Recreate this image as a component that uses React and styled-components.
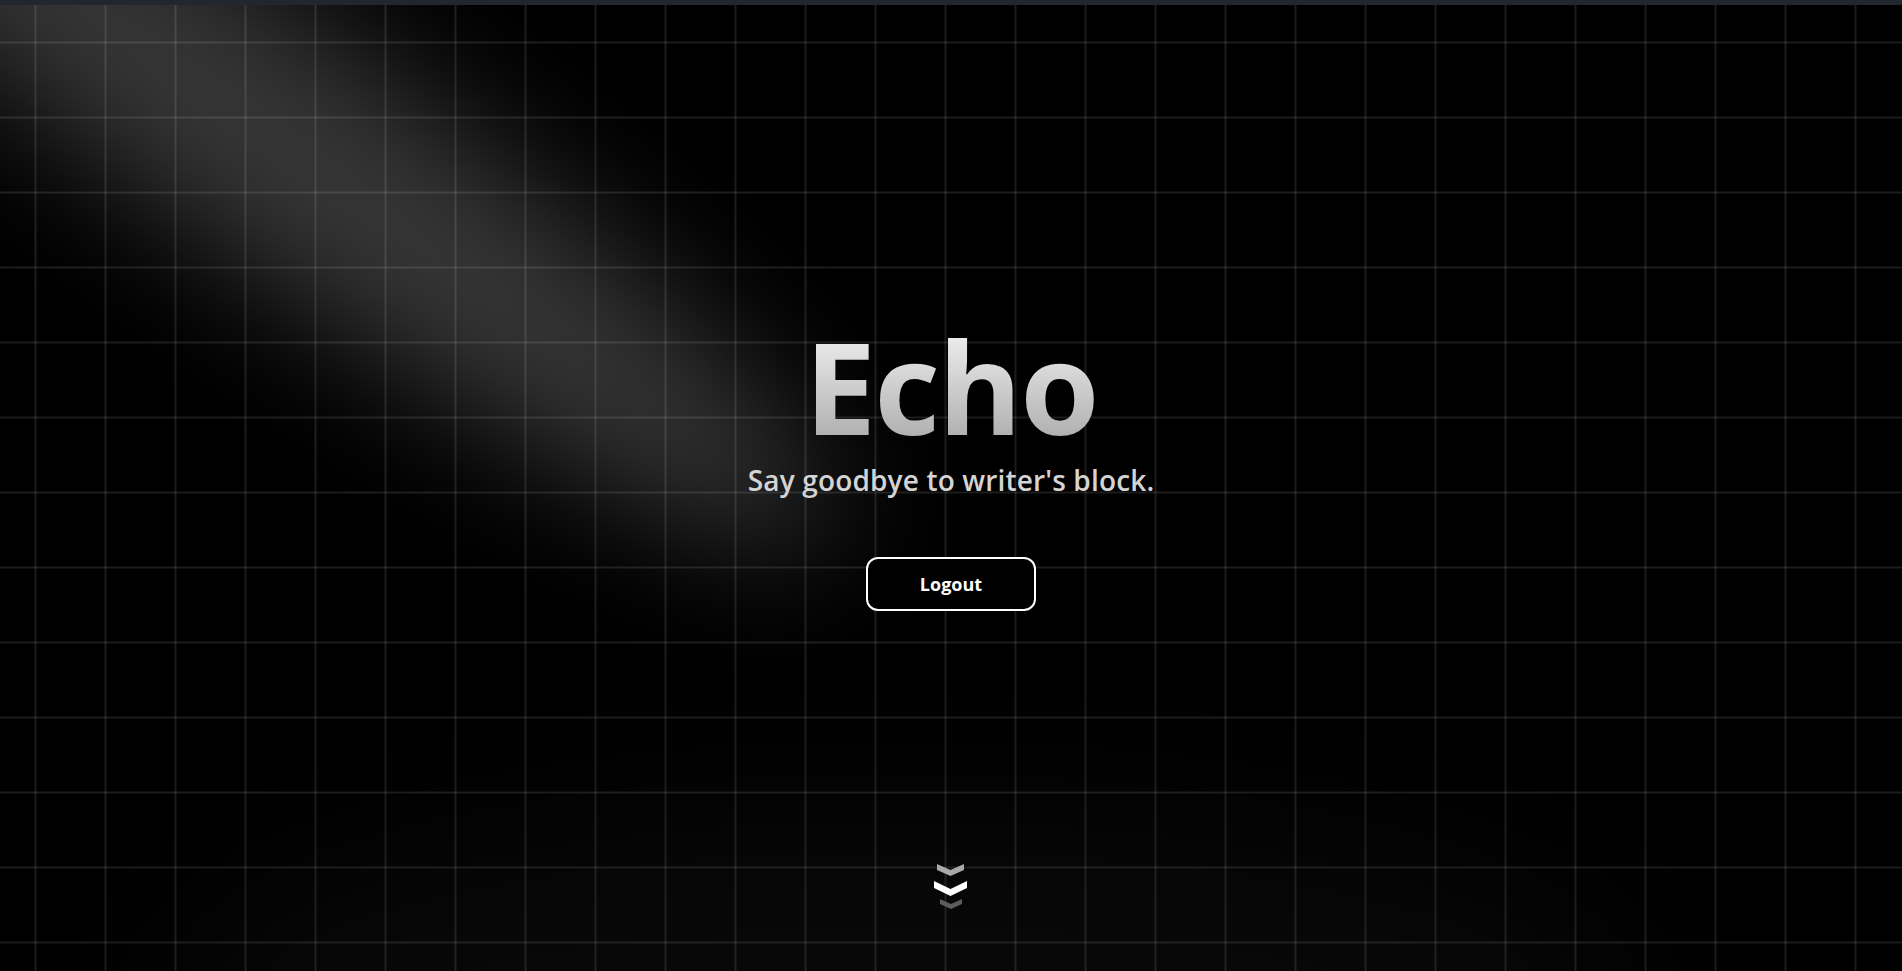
import React from "react";
import styled, { createGlobalStyle } from "styled-components";

const GlobalStyle = createGlobalStyle`
  * {
    box-sizing: border-box;
  }
  html,
  body {
    margin: 0;
    padding: 0;
    background: #000;
  }
  body {
    font-family: "Open Sans", "Noto Sans", sans-serif;
    overflow: hidden;
  }
`;

const TopBar = styled.div`
  height: 5px;
  background: #22272e;
`;

const gridLine = (dir) => `linear-gradient(
    ${dir},
    rgba(255, 255, 255, 0.05) 0,
    rgba(255, 255, 255, 0.05) 1px,
    rgba(255, 255, 255, 0.11) 1px,
    rgba(255, 255, 255, 0.11) 2px,
    rgba(255, 255, 255, 0.05) 2px,
    rgba(255, 255, 255, 0.05) 3px,
    transparent 3px
  )`;

const Hero = styled.section`
  position: relative;
  overflow: hidden;
  height: calc(100vh - 5px);
  display: flex;
  flex-direction: column;
  align-items: center;
  padding-top: 307px;
  background-color: #000;
  background-image: ${gridLine("to right")}, ${gridLine("to bottom")};
  background-size: 70px 75px;
  background-position: 34px 36px;
`;

const Spotlight = styled.div`
  position: absolute;
  left: -440px;
  top: 5px;
  width: 1400px;
  height: 240px;
  border-radius: 50%;
  background: rgba(255, 255, 255, 0.21);
  filter: blur(65px);
  transform: rotate(35.4deg);
  pointer-events: none;
  z-index: 0;
`;

const FloorGlow = styled.div`
  position: absolute;
  left: 150px;
  bottom: -260px;
  width: 1500px;
  height: 420px;
  border-radius: 50%;
  background: rgba(255, 255, 255, 0.03);
  filter: blur(80px);
  pointer-events: none;
  z-index: 0;
`;

const Title = styled.h1`
  position: relative;
  z-index: 1;
  margin: 0;
  font-size: 128px;
  line-height: 1.15;
  font-weight: 700;
  letter-spacing: -2px;
  background: linear-gradient(to bottom, #fafafa, #a3a3a3);
  -webkit-background-clip: text;
  background-clip: text;
  color: transparent;
  user-select: none;
`;

const Subtitle = styled.p`
  position: relative;
  z-index: 1;
  margin: 3px 0 0;
  font-size: 28px;
  line-height: 36px;
  font-weight: 600;
  letter-spacing: 0.15px;
  color: #d4d4d4;
`;

const Button = styled.button`
  position: relative;
  z-index: 1;
  margin-top: 59px;
  width: 170px;
  height: 54px;
  border: 2px solid #fff;
  border-radius: 12px;
  background: #000;
  color: #fff;
  font-family: inherit;
  font-size: 18px;
  font-weight: 700;
  cursor: pointer;
`;

const ScrollHint = styled.div`
  position: relative;
  z-index: 1;
  margin-top: auto;
  margin-bottom: 61px;
  display: flex;
`;

function Chevrons() {
  return (
    <svg width="34" height="46" viewBox="0 0 34 46">
      <polygon points="3,0 16.5,6 30,0 30,6 16.5,12 3,6" fill="#a9a9a9" />
      <polygon points="0,17 16.5,25 33,17 33,24 16.5,32 0,24" fill="#ffffff" />
      <polygon points="6,35 17,40 28,35 28,40 17,45 6,40" fill="#5c5c5c" />
    </svg>
  );
}

export default function App() {
  return (
    <>
      <GlobalStyle />
      <TopBar />
      <Hero>
        <Spotlight />
        <FloorGlow />
        <Title>Echo</Title>
        <Subtitle>Say goodbye to writer's block.</Subtitle>
        <Button>Logout</Button>
        <ScrollHint>
          <Chevrons />
        </ScrollHint>
      </Hero>
    </>
  );
}
